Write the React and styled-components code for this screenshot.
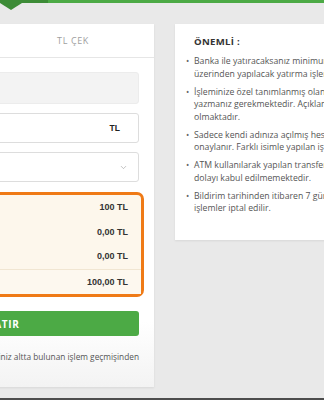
import React from "react";
import styled, { createGlobalStyle } from "styled-components";
import { ChevronDown } from "lucide-react";

const GlobalStyle = createGlobalStyle`
html, body {
  margin: 0;
  padding: 0;
  background: #e9e9e9;
  overflow: hidden;
}
body {
  font-family: 'Open Sans', 'DejaVu Sans', sans-serif;
}
`

const rows = [
  { label: "Yatırılacak Tutar", value: "100 TL" },
  { label: "Bonus", value: "0,00 TL" },
  { label: "Komisyon", value: "0,00 TL" },
  { label: "Toplam", value: "100,00 TL", total: true },
];

const notes = [
  ["Banka ile yatıracaksanız minimum 50 TL", "üzerinden yapılacak yatırma işlemleri onaylanır."],
  ["İşleminize özel tanımlanmış olan açıklama kodunu", "yazmanız gerekmektedir. Açıklamasız işlemler iade", "olmaktadır."],
  ["Sadece kendi adınıza açılmış hesaplardan gelen", "onaylanır. Farklı isimle yapılan işlemler iade edilir."],
  ["ATM kullanılarak yapılan transferler güvenlik", "dolayı kabul edilmemektedir."],
  ["Bildirim tarihinden itibaren 7 gün içinde onaylanmayan", "işlemler iptal edilir."],
];

export default function App() {
  return (
    <>
      <GlobalStyle />
      <Screen>
        <TopBar>
          <svg width="48" height="10" viewBox="0 0 48 10">
            <rect x="0" y="0" width="48" height="3" fill="#3d8c37" />
            <polygon points="0,3 22,3 11,10" fill="#3d8c37" />
          </svg>
        </TopBar>
        <Main>
          <FormCard>
            <Tabs>
              <Tab active>TL YATIR</Tab>
              <Tab>TL ÇEK</Tab>
            </Tabs>
            <FormBody>
              <ReadOnlyInput />
              <Field>
                <FieldInput />
                <Suffix>TL</Suffix>
              </Field>
              <Field>
                <FieldInput />
                <ChevronDown size={9} color="#9a9a9a" strokeWidth={1.6} />
              </Field>
              <Summary>
                {rows.map((r) => (
                  <SummaryRow key={r.label} total={r.total}>
                    <span>{r.label}</span>
                    <Amount>{r.value}</Amount>
                  </SummaryRow>
                ))}
              </Summary>
              <SubmitButton>TL YATIR</SubmitButton>
              <Note>Yatırma talebiniz altta bulunan işlem geçmişinden</Note>
            </FormBody>
          </FormCard>
          <InfoCard>
            <InfoTitle>ÖNEMLİ :</InfoTitle>
            <InfoList>
              {notes.map((lines, i) => (
                <InfoItem key={i}>
                  <Dot>•</Dot>
                  <div>
                    {lines.map((l) => (
                      <Line key={l}>{l}</Line>
                    ))}
                  </div>
                </InfoItem>
              ))}
            </InfoList>
          </InfoCard>
        </Main>
        <BottomBar />
      </Screen>
    </>
  );
}

const Screen = styled.div`
height: 400px;
display: flex;
flex-direction: column;
`
const TopBar = styled.div`
height: 3px;
flex: 0 0 3px;
background: #4caa45;
display: flex;
align-items: flex-start;
svg { display: block; flex: 0 0 auto; }
`
const Main = styled.div`
flex: 1;
display: flex;
align-items: flex-start;
gap: 21px;
padding-top: 21px;
margin-left: -170px;
`
const BottomBar = styled.div`
flex: 0 0 2px;
background: #4d4d4d;
`
const FormCard = styled.div`
flex: 0 0 324px;
height: 363px;
background: linear-gradient(#ffffff 82%, #f3f3f3);
box-shadow: 0 1px 2px rgba(0,0,0,0.08);
display: flex;
flex-direction: column;
`
const Tabs = styled.div`
display: flex;
height: 33px;
border-bottom: 1px solid #e6e6e6;
`
const Tab = styled.div`
flex: 1;
display: flex;
align-items: center;
justify-content: center;
font-size: 9px;
letter-spacing: 0.6px;
color: ${(p) => (p.active ? "#4caa45" : "#a0a0a0")};
`
const FormBody = styled.div`
padding: 14px 15px 0 15px;
display: flex;
flex-direction: column;
`
const ReadOnlyInput = styled.div`
height: 30px;
background: #f3f3f3;
border: 1px solid #ececec;
border-radius: 3px;
margin-bottom: 9px;
`
const Field = styled.div`
height: 28px;
border: 1px solid #dddddd;
border-radius: 3px;
display: flex;
align-items: center;
padding-right: 10px;
margin-bottom: 9px;
background: #fff;
`
const FieldInput = styled.div`
flex: 1;
`
const Suffix = styled.span`
font-family: 'Liberation Sans', Arial, sans-serif;
font-weight: bold;
font-size: 8.5px;
color: #222;
margin-right: 8px;
`
const Summary = styled.div`
margin: 1px -5px 0 -5px;
border: 3px solid #ef7a16;
border-radius: 7px;
background: #fdf7ec;
display: flex;
flex-direction: column;
`
const SummaryRow = styled.div`
height: 24.5px;
display: flex;
align-items: center;
justify-content: space-between;
padding: 0 13px;
font-size: 8px;
color: #555;
border-top: ${(p) => (p.total ? "1px solid #f1e6d2" : "none")};
background: ${(p) => (p.total ? "#fdf8ef" : "transparent")};
`
const Amount = styled.span`
font-family: 'Liberation Sans', Arial, sans-serif;
font-weight: bold;
font-size: 9px;
color: #333;
`
const SubmitButton = styled.button`
margin-top: 14px;
height: 25px;
padding: 0 0 0 7px;
border: none;
border-radius: 3px;
background: #4caa45;
color: #fff;
font-family: 'Open Sans', sans-serif;
font-weight: bold;
font-size: 10px;
letter-spacing: 0.6px;
`
const Note = styled.p`
margin: 15px 0 0 0;
text-align: right;
white-space: nowrap;
font-size: 8.3px;
line-height: 12px;
color: #555;
`
const InfoCard = styled.div`
flex: 0 0 300px;
height: 216px;
box-sizing: border-box;
background: #fff;
box-shadow: 0 1px 2px rgba(0,0,0,0.08);
padding: 12px 0 0 19px;
overflow: hidden;
`
const InfoTitle = styled.div`
font-weight: bold;
font-size: 9.6px;
line-height: 12px;
color: #333;
letter-spacing: 0.3px;
margin-bottom: 7px;
`
const InfoList = styled.ul`
list-style: none;
margin: 0;
padding: 0;
`
const InfoItem = styled.li`
display: flex;
margin-bottom: 5.5px;
font-size: 8.7px;
line-height: 12.5px;
color: #555;
`
const Dot = styled.span`
flex: 0 0 8px;
margin-left: -8px;
color: #666;
`
const Line = styled.div`
white-space: nowrap;
`
